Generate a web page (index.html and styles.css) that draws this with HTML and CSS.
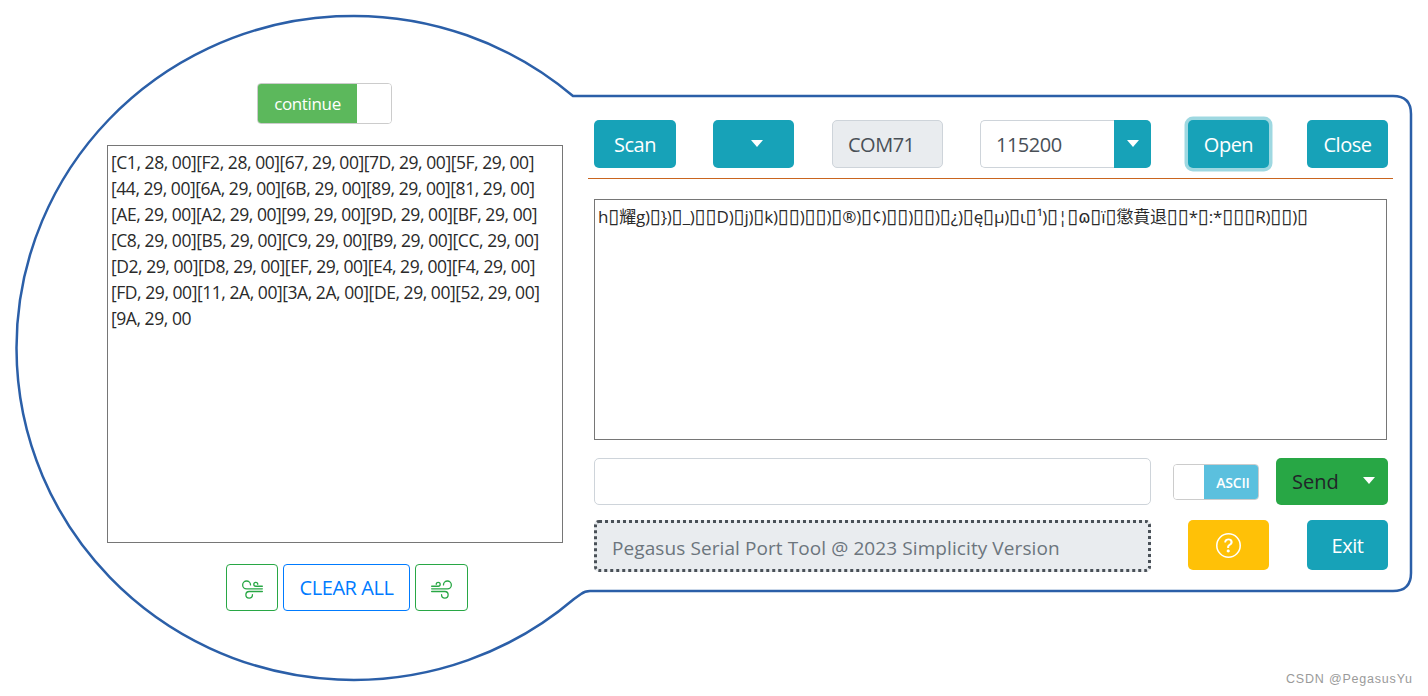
FILE: index.html
```html
<!DOCTYPE html>
<html lang="en">
<head>
<meta charset="utf-8">
<title>Pegasus Serial Port Tool</title>
<link rel="stylesheet" href="styles.css">
</head>
<body>
<div class="app">
  <svg class="outline" width="1428" height="696" viewBox="0 0 1428 696" aria-hidden="true">
    <path d="M573 96H1393Q1411 96 1411 114V573Q1411 591 1393 591H590Q585 591 581 594L574 599A337 332 0 1 1 573 96Z"/>
  </svg>
  <section class="left">
    <div class="toggle toggle-continue"><span class="on-green">continue</span><span class="off"></span></div>
    <div class="log">[C1, 28, 00][F2, 28, 00][67, 29, 00][7D, 29, 00][5F, 29, 00]<br>[44, 29, 00][6A, 29, 00][6B, 29, 00][89, 29, 00][81, 29, 00]<br>[AE, 29, 00][A2, 29, 00][99, 29, 00][9D, 29, 00][BF, 29, 00]<br>[C8, 29, 00][B5, 29, 00][C9, 29, 00][B9, 29, 00][CC, 29, 00]<br>[D2, 29, 00][D8, 29, 00][EF, 29, 00][E4, 29, 00][F4, 29, 00]<br>[FD, 29, 00][11, 2A, 00][3A, 2A, 00][DE, 29, 00][52, 29, 00]<br>[9A, 29, 00</div>
    <div class="log-actions">
      <button class="btn-outline green icon-left"><svg class="wind flip" viewBox="0 0 16 16" width="21" height="21"><path d="M12.5 2A2.5 2.5 0 0 0 10 4.5a.5.5 0 0 1-1 0A3.5 3.5 0 1 1 12.5 8H.5a.5.5 0 0 1 0-1h12a2.5 2.5 0 0 0 0-5zm-7 1a1 1 0 0 0-1 1 .5.5 0 0 1-1 0 2 2 0 1 1 2 2h-5a.5.5 0 0 1 0-1h5a1 1 0 0 0 0-2zM0 9.5A.5.5 0 0 1 .5 9h10.042a3 3 0 1 1-3 3 .5.5 0 0 1 1 0 2 2 0 1 0 2-2H.5a.5.5 0 0 1-.5-.5z"/></svg></button>
      <button class="btn-outline blue">CLEAR ALL</button>
      <button class="btn-outline green icon-right"><svg class="wind" viewBox="0 0 16 16" width="21" height="21"><path d="M12.5 2A2.5 2.5 0 0 0 10 4.5a.5.5 0 0 1-1 0A3.5 3.5 0 1 1 12.5 8H.5a.5.5 0 0 1 0-1h12a2.5 2.5 0 0 0 0-5zm-7 1a1 1 0 0 0-1 1 .5.5 0 0 1-1 0 2 2 0 1 1 2 2h-5a.5.5 0 0 1 0-1h5a1 1 0 0 0 0-2zM0 9.5A.5.5 0 0 1 .5 9h10.042a3 3 0 1 1-3 3 .5.5 0 0 1 1 0 2 2 0 1 0 2-2H.5a.5.5 0 0 1-.5-.5z"/></svg></button>
    </div>
  </section>
  <section class="right">
    <div class="row-top">
      <button class="btn teal w-scan">Scan</button>
      <button class="btn teal w-btn port-caret"><i class="caret"></i></button>
      <div class="field disabled w-com">COM71</div>
      <div class="baud"><div class="field baud-value">115200</div><button class="btn teal baud-caret"><i class="caret"></i></button></div>
      <button class="btn teal w-btn focus">Open</button>
      <button class="btn teal w-btn close">Close</button>
    </div>
    <hr class="rule">
    <div class="rx">h<b>▯</b>耀g)<b>▯</b>})<b>▯</b>_)<b>▯▯</b>D)<b>▯</b>j)<b>▯</b>k)<b>▯▯</b>)<b>▯▯</b>)<b>▯</b>®)<b>▯</b>¢)<b>▯▯</b>)<b>▯▯</b>)<b>▯</b>¿)<b>▯</b>ę<b>▯</b>µ)<b>▯</b>ι<b>▯</b>¹)<b>▯</b>¦<b>▯</b>ɷ<b>▯</b>ï<b>▯</b>懲賁退<b>▯▯</b>*<b>▯</b>:*<b>▯▯▯</b>R)<b>▯▯</b>)<b>▯</b></div>
    <div class="row-send">
      <div class="field send-input"></div>
      <div class="toggle toggle-ascii"><span class="off"></span><span class="on-blue">ASCII</span></div>
      <button class="btn send"><span>Send</span><i class="caret"></i></button>
    </div>
    <div class="row-bottom">
      <div class="status">Pegasus Serial Port Tool @ 2023 Simplicity Version</div>
      <button class="btn yellow w-btn h-50"><svg viewBox="0 0 16 16" width="25" height="25" fill="currentColor"><path d="M8 15A7 7 0 1 1 8 1a7 7 0 0 1 0 14zm0 1A8 8 0 1 0 8 0a8 8 0 0 0 0 16z"/><path d="M5.255 5.786a.237.237 0 0 0 .241.247h.825c.138 0 .248-.113.266-.25.09-.656.54-1.134 1.342-1.134.686 0 1.314.343 1.314 1.168 0 .635-.374.927-.965 1.371-.673.489-1.206 1.06-1.168 1.987l.003.217a.25.25 0 0 0 .25.246h.811a.25.25 0 0 0 .25-.25v-.105c0-.718.273-.927 1.01-1.486.609-.463 1.244-.977 1.244-2.056 0-1.511-1.276-2.241-2.673-2.241-1.267 0-2.655.59-2.75 2.286zm1.557 5.763c0 .533.425.927 1.01.927.609 0 1.028-.394 1.028-.927 0-.552-.42-.94-1.029-.94-.584 0-1.009.388-1.009.94z"/></svg></button>
      <button class="btn teal w-btn h-50">Exit</button>
    </div>
  </section>
  <div class="watermark">CSDN @PegasusYu</div>
</div>
</body>
</html>
```

FILE: styles.css
```css
* { box-sizing: border-box; }
html, body { margin: 0; padding: 0; background: #fff; }
body { font-family: "Open Sans", "Noto Sans CJK SC", sans-serif; color: #212529; overflow: hidden; }
.app { position: relative; width: 1428px; height: 696px; display: flex; overflow: hidden; }
.outline { position: absolute; left: 0; top: 0; }
.outline path { fill: none; stroke: #2b5fa8; stroke-width: 2.5; }

.left { position: relative; width: 456px; margin-left: 107px; padding-top: 83px; display: flex; flex-direction: column; align-items: flex-start; }
.toggle { display: flex; border: 1px solid #ccc; border-radius: 4px; overflow: hidden; color: #fff; }
.toggle-continue { width: 135px; height: 41px; margin-left: 150px; font-size: 17px; }
.toggle .off { flex: 1; background: #fff; }
.on-green { width: 99px; background: #5cb85c; display: flex; align-items: center; justify-content: center; letter-spacing: -.35px; }
.log { width: 456px; height: 398px; margin-top: 21px; border: 1px solid #767676; padding: 3px 3px; font-size: 17.5px; line-height: 26px; letter-spacing: -.45px; color: #2a2a2a; white-space: nowrap; }
.log-actions { display: flex; gap: 5px; margin-top: 21px; margin-left: 119px; }
.btn-outline { height: 47px; background: #fff; border: 1px solid; border-radius: 4px; font: inherit; display: flex; align-items: center; justify-content: center; padding: 0; }
.btn-outline.green { color: #28a745; border-color: #28a745; }
.btn-outline.blue { width: 127px; color: #007bff; border-color: #007bff; font-size: 20px; letter-spacing: -.45px; }
.icon-left { width: 52px; }
.icon-right { width: 53px; }
.wind { fill: currentColor; margin-top: 4px; }
.wind.flip { transform: scaleX(-1); }

.right { position: relative; width: 794px; margin-left: 31px; padding-top: 120px; display: flex; flex-direction: column; }
.row-top { display: flex; gap: 37px; height: 48px; }
.btn { border: 0; border-radius: 5px; font: inherit; font-size: 20px; letter-spacing: -.5px; display: flex; align-items: center; justify-content: center; padding: 0; color: #fff; }
.teal { background: #17a2b8; }
.yellow { background: #ffc107; }
.w-scan { width: 82px; }
.w-btn { width: 81px; }
.w-com { width: 111px; margin-left: 1px; }
.close { margin-left: 1px; }
.port-caret .caret { margin-left: 6px; }
.focus { box-shadow: 0 0 0 3.5px rgba(23, 162, 184, .42); }
.caret { display: inline-block; border-top: 7px solid #fff; border-left: 6.5px solid transparent; border-right: 6.5px solid transparent; margin-bottom: 2px; }
.field { border: 1px solid #ced4da; border-radius: 5px; background: #fff; color: #495057; font-size: 20px; letter-spacing: -.5px; display: flex; align-items: center; padding-left: 15px; }
.field.disabled { background: #e9ecef; }
.baud { display: flex; width: 171px; }
.baud-value { flex: 1; border-radius: 5px 0 0 5px; border-right: 0; }
.baud-caret { width: 37px; border-radius: 0 5px 5px 0; }
.rule { width: 805px; height: 1px; margin: 10px 0 0 -6px; border: 0; background: #c9651f; }
.rx { width: 793px; height: 241px; margin-top: 20px; border: 1px solid #767676; padding: 4px 3px; font-family: "Open Sans", "DejaVu Sans", "Noto Sans CJK SC", sans-serif; font-size: 17px; line-height: 26px; letter-spacing: -.25px; color: #2a2a2a; white-space: nowrap; overflow: hidden; }
.rx b { font-weight: 400; font-size: 20px; line-height: 1; letter-spacing: 0; }
.row-send { display: flex; align-items: center; height: 47px; margin-top: 18px; }
.send-input { width: 557px; height: 47px; }
.toggle-ascii { width: 86px; height: 36px; margin-left: 22px; margin-right: 17px; }
.on-blue { width: 54px; background: #5bc0de; display: flex; align-items: center; justify-content: center; padding: 1px 0 0 4px; font-size: 14px; font-weight: 600; letter-spacing: -.2px; }
.send { width: 112px; height: 47px; background: #28a745; color: #212529; justify-content: space-between; padding: 0 13px 0 16px; letter-spacing: 0; }
.send .caret { margin-bottom: 3px; }
.row-bottom { display: flex; align-items: flex-start; height: 52px; margin-top: 15px; }
.status { width: 557px; height: 52px; background: #e9ecef; border: 3px dotted #495057; border-radius: 5px; color: #6c757d; font-size: 19px; letter-spacing: .09px; display: flex; align-items: center; padding: 3px 0 0 15px; white-space: nowrap; }
.h-50 { height: 50px; }
.row-bottom .yellow { margin-left: 37px; }
.row-bottom .teal { margin-left: 38px; }
.watermark { position: absolute; left: 1286px; top: 672px; font-family: "Liberation Sans", sans-serif; font-size: 12.5px; color: #9a9a9a; letter-spacing: .8px; white-space: nowrap; }
```
